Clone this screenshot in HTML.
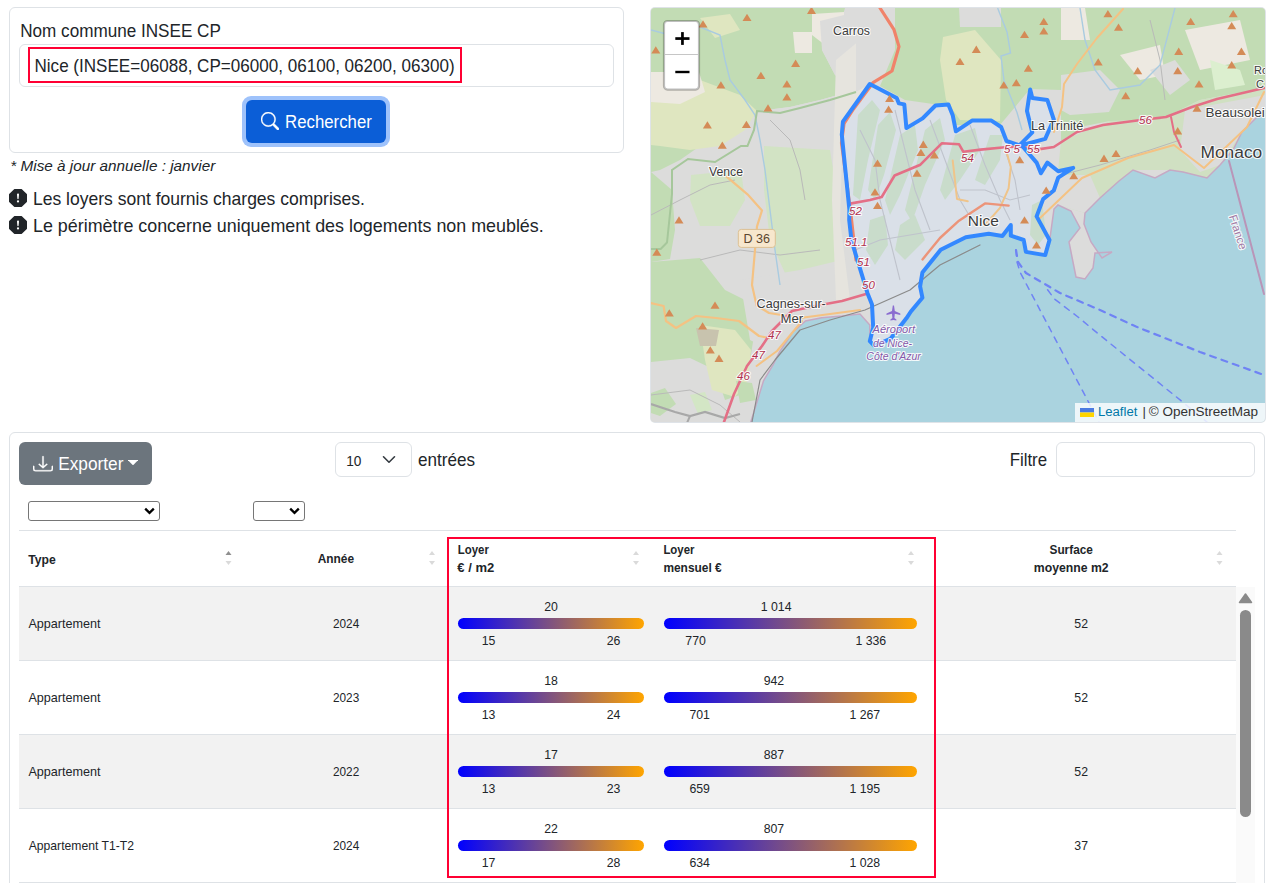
<!DOCTYPE html>
<html lang="fr">
<head>
<meta charset="utf-8">
<title>Loyers</title>
<style>
*{box-sizing:border-box;margin:0;padding:0}
html,body{width:1274px;height:883px;overflow:hidden;background:#fff}
body{font-family:"Liberation Sans",sans-serif;color:#212529;position:relative}
.abs{position:absolute}
.card{position:absolute;border:1px solid #dee2e6;border-radius:6px;background:#fff}
.sel{position:absolute;border:1px solid #767676;border-radius:3px;background:#fff}
.bar{position:absolute;height:11px;border-radius:6px;background:linear-gradient(to right,#0000ff,#ffa500)}
svg text{font-family:"Liberation Sans",sans-serif}
#ov{position:absolute;left:0;top:0;z-index:10;pointer-events:none}
</style>
</head>
<body>

<!-- Search card -->
<div class="card" style="left:9px;top:7px;width:615px;height:146px"></div>
<div class="abs" style="left:19px;top:44px;width:595px;height:43px;border:1px solid #dee2e6;border-radius:6px"></div>
<div class="abs" style="left:28px;top:47px;width:434px;height:36px;border:2px solid #ff0033"></div>
<div class="abs" style="left:242px;top:96px;width:148px;height:51px;border-radius:9px;background:#9ec2fb"></div>
<div class="abs" style="left:246px;top:100px;width:140px;height:43px;border-radius:6px;background:#0b5ed7"></div>
<svg class="abs" style="left:261px;top:112px" width="18" height="18" viewBox="0 0 16 16" fill="#fff" stroke="#fff" stroke-width="0.35"><path d="M11.742 10.344a6.5 6.5 0 1 0-1.397 1.398h-.001q.044.06.098.115l3.85 3.85a1 1 0 0 0 1.415-1.414l-3.85-3.85a1 1 0 0 0-.115-.1zM12 6.5a5.5 5.5 0 1 1-11 0 5.5 5.5 0 0 1 11 0"/></svg>

<svg class="abs" style="left:9px;top:189px" width="18" height="18" viewBox="0 0 16 16" fill="#212529"><path d="M11.46.146A.5.5 0 0 0 11.107 0H4.893a.5.5 0 0 0-.353.146L.146 4.54A.5.5 0 0 0 0 4.893v6.214a.5.5 0 0 0 .146.353l4.394 4.394a.5.5 0 0 0 .353.146h6.214a.5.5 0 0 0 .353-.146l4.394-4.394a.5.5 0 0 0 .146-.353V4.893a.5.5 0 0 0-.146-.353zM8 4c.535 0 .954.462.9.995l-.35 3.507a.552.552 0 0 1-1.1 0L7.1 4.995A.905.905 0 0 1 8 4m.002 6a1 1 0 1 1 0 2 1 1 0 0 1 0-2"/></svg>
<svg class="abs" style="left:9px;top:216px" width="18" height="18" viewBox="0 0 16 16" fill="#212529"><path d="M11.46.146A.5.5 0 0 0 11.107 0H4.893a.5.5 0 0 0-.353.146L.146 4.54A.5.5 0 0 0 0 4.893v6.214a.5.5 0 0 0 .146.353l4.394 4.394a.5.5 0 0 0 .353.146h6.214a.5.5 0 0 0 .353-.146l4.394-4.394a.5.5 0 0 0 .146-.353V4.893a.5.5 0 0 0-.146-.353zM8 4c.535 0 .954.462.9.995l-.35 3.507a.552.552 0 0 1-1.1 0L7.1 4.995A.905.905 0 0 1 8 4m.002 6a1 1 0 1 1 0 2 1 1 0 0 1 0-2"/></svg>

<!-- MAP -->
<div id="map" class="abs" style="left:651px;top:8px;width:614px;height:414px;border-radius:4px;overflow:hidden;background:#dcdcd6;box-shadow:0 0 0 1px #dfe3e8">
<svg width="614" height="414" viewBox="651 8 614 414" style="position:absolute;left:0;top:0">
<rect x="651" y="8" width="614" height="414" fill="#dcdcdb"/>
<polygon points="651.0,8.0 845.0,8.0 840.0,25.0 822.0,50.0 835.0,75.0 856.0,88.0 845.0,93.0 820.0,100.0 790.0,107.0 757.0,111.0 745.0,125.0 735.0,135.0 700.0,146.0 680.0,160.0 660.0,170.0 651.0,172.0" fill="#c2dcb4"/>
<polygon points="651.0,85.0 700.0,80.0 740.0,95.0 757.0,111.0 745.0,130.0 720.0,146.0 690.0,150.0 660.0,146.0 651.0,145.0" fill="#dfe6c0"/>
<polygon points="651.0,72.0 699.0,72.0 705.0,92.0 680.0,104.0 651.0,102.0" fill="#ede9e1"/>
<polygon points="812.0,14.0 844.0,12.0 844.0,40.0 825.0,45.0 812.0,35.0" fill="#ede9e1"/>
<polygon points="793.0,32.0 812.0,32.0 812.0,53.0 795.0,53.0" fill="#ede9e1"/>
<polygon points="700.0,18.0 730.0,14.0 740.0,30.0 715.0,38.0" fill="#dfe6c0"/>
<polygon points="757.0,111.0 790.0,107.0 820.0,100.0 845.0,93.0 856.0,88.0 856.0,146.0 830.0,160.0 800.0,165.0 765.0,165.0 750.0,150.0" fill="#dcdcdb"/>
<polygon points="820.0,21.0 856.0,12.0 856.0,88.0 835.0,75.0 822.0,50.0" fill="#dcdcdb"/>
<polygon points="651.0,172.0 672.0,190.0 675.0,230.0 670.0,259.0 651.0,262.0" fill="#c2dcb4"/>
<polygon points="691.0,175.0 741.0,170.0 745.0,200.0 730.0,226.0 700.0,226.0 690.0,200.0" fill="#d2e3c4"/>
<polygon points="764.0,146.0 830.0,150.0 838.0,200.0 836.0,284.0 790.0,284.0 770.0,240.0 764.0,190.0" fill="#d2e3c4"/>
<polygon points="651.0,262.0 700.0,258.0 725.0,290.0 745.0,300.0 755.0,330.0 750.0,360.0 740.0,395.0 725.0,400.0 715.0,370.0 690.0,358.0 651.0,362.0" fill="#c2dcb4"/>
<polygon points="700.0,325.0 735.0,330.0 751.0,350.0 748.0,380.0 735.0,397.0 712.0,390.0 705.0,360.0" fill="#dfe6c0"/>
<polygon points="696.0,328.0 719.0,330.0 716.0,346.0 700.0,346.0" fill="#c8c3ae"/>
<polygon points="651.0,393.0 665.0,388.0 676.0,404.0 660.0,416.0 651.0,413.0" fill="#c2dcb4"/>
<polygon points="736.0,381.0 752.0,383.0 756.0,400.0 740.0,403.0" fill="#c2dcb4"/>
<polygon points="690.0,395.0 705.0,392.0 712.0,410.0 698.0,414.0" fill="#d3e6c5"/>
<polygon points="740.0,280.0 800.0,270.0 850.0,258.0 862.0,295.0 860.0,312.0 820.0,318.0 790.0,330.0 770.0,350.0 750.0,340.0" fill="#dcdcdb"/>
<polygon points="836.0,60.0 860.0,40.0 880.0,30.0 870.0,84.0 843.0,122.0 840.0,220.0 850.0,300.0 836.0,300.0 832.0,200.0" fill="#e6e4de"/>
<polygon points="856.0,8.0 901.0,8.0 898.0,50.0 880.0,85.0 869.8,84.0 856.0,92.0" fill="#dcdcdb"/>
<polygon points="895.0,8.0 1061.0,8.0 1061.0,90.0 1030.0,89.0 1000.0,125.0 955.0,125.0 940.0,105.0 905.0,100.0 880.0,86.0 895.0,50.0" fill="#c2dcb4"/>
<polygon points="943.0,37.0 975.0,30.0 1001.0,60.0 1000.0,121.0 960.0,120.0 946.0,100.0 940.0,60.0" fill="#dfe6c0"/>
<polygon points="959.0,8.0 1001.0,8.0 1001.0,27.0 960.0,27.0" fill="#dcdcdb"/>
<polygon points="1061.0,8.0 1265.0,8.0 1265.0,88.0 1200.0,100.0 1160.0,120.0 1110.0,121.0 1085.0,126.0 1061.0,141.0" fill="#c2dcb4"/>
<polygon points="1061.0,8.0 1085.0,8.0 1090.0,40.0 1061.0,40.0" fill="#ede9e1"/>
<polygon points="1185.0,30.0 1240.0,20.0 1250.0,60.0 1200.0,70.0" fill="#ede9e1"/>
<polygon points="1120.0,55.0 1160.0,45.0 1165.0,75.0 1140.0,80.0" fill="#ede9e1"/>
<polygon points="1210.0,60.0 1240.0,70.0 1245.0,85.0 1215.0,90.0" fill="#dcefcf"/>
<polygon points="1061.0,75.0 1100.0,70.0 1120.0,90.0 1109.0,112.0 1070.0,115.0 1061.0,110.0" fill="#dcdcdb"/>
<polygon points="1150.0,70.0 1175.0,60.0 1190.0,80.0 1170.0,95.0" fill="#dcdcdb"/>
<polygon points="1061.0,141.0 1110.0,121.0 1160.0,120.0 1200.0,100.0 1265.0,88.0 1265.0,109.0 1233.0,150.0 1207.0,178.0 1170.0,170.0 1133.0,170.0 1100.0,198.0 1085.0,213.0 1058.0,205.0 1050.0,190.0 1058.0,177.0 1073.0,168.0 1058.0,171.0" fill="#d0e0c2"/>
<polygon points="1185.0,110.0 1265.0,95.0 1265.0,110.0 1242.0,132.0 1220.0,165.0 1200.0,172.0 1180.0,150.0" fill="#dcdcdb"/>
<polygon points="1045.0,175.0 1090.0,175.0 1100.0,198.0 1085.0,213.0 1058.0,205.0 1045.0,210.0" fill="#dcdcdb"/>
<polygon points="869.8,84.0 896.7,98.0 898.9,103.4 904.3,104.4 906.4,128.1 922.6,118.4 935.5,105.5 948.4,104.4 952.7,115.2 955.9,131.3 972.0,120.6 991.4,120.6 1001.1,127.0 1006.5,141.0 1019.4,145.3 1032.3,132.4 1027.0,110.9 1030.2,89.4 1032.3,98.0 1047.4,100.1 1053.8,119.5 1045.2,138.9 1021.6,145.3 1036.6,162.6 1040.9,173.3 1047.4,162.6 1058.2,171.2 1073.2,167.9 1058.2,177.6 1053.8,190.5 1043.1,199.1 1036.6,216.4 1049.5,240.0 1045.2,255.1 1025.9,251.9 1023.7,240.0 1010.8,235.7 1010.8,225.0 1002.4,236.0 988.7,233.7 965.8,237.2 940.7,249.7 922.4,272.6 920.1,286.3 922.4,297.7 910.9,311.5 906.4,318.3 890.3,338.9 874.3,345.8 869.8,341.2 873.2,327.5 872.0,304.6 867.5,293.2 851.5,240.6 849.2,220.0 849.4,209.9 841.8,134.6 842.9,121.7" fill="#dae0e8"/>
<polygon points="858.0,115.0 872.0,100.0 880.0,110.0 868.0,160.0 860.0,200.0 853.0,195.0" fill="#c9dccb"/>
<polygon points="878.0,125.0 890.0,112.0 896.0,130.0 884.0,175.0 875.0,200.0 868.0,190.0" fill="#c9dccb"/>
<polygon points="900.0,135.0 915.0,125.0 918.0,150.0 900.0,195.0 890.0,215.0 885.0,200.0" fill="#c9dccb"/>
<polygon points="925.0,130.0 940.0,118.0 945.0,140.0 925.0,185.0 912.0,222.0 905.0,210.0" fill="#c9dccb"/>
<polygon points="955.0,135.0 975.0,128.0 980.0,150.0 960.0,180.0 945.0,200.0 940.0,190.0" fill="#c9dccb"/>
<polygon points="990.0,135.0 1003.0,135.0 1000.0,160.0 985.0,185.0 975.0,180.0" fill="#c9dccb"/>
<polygon points="900.0,225.0 915.0,215.0 925.0,240.0 905.0,260.0 895.0,250.0" fill="#c9dccb"/>
<polygon points="870.0,220.0 885.0,215.0 888.0,245.0 875.0,265.0 866.0,250.0" fill="#c9dccb"/>
<polygon points="1032.0,205.0 1042.0,200.0 1046.0,235.0 1038.0,245.0 1030.0,235.0" fill="#c9dccb"/>
<polyline points="860.0,130.0 875.0,160.0 880.0,200.0 890.0,240.0 900.0,280.0" fill="none" stroke="#bfc3cc" stroke-width="1.1"/>
<polyline points="895.0,110.0 905.0,150.0 915.0,190.0 930.0,230.0" fill="none" stroke="#bfc3cc" stroke-width="1.1"/>
<polyline points="930.0,120.0 945.0,160.0 960.0,200.0 975.0,225.0" fill="none" stroke="#bfc3cc" stroke-width="1.1"/>
<polyline points="970.0,125.0 985.0,165.0 1000.0,200.0 1010.0,220.0" fill="none" stroke="#bfc3cc" stroke-width="1.1"/>
<polyline points="1005.0,150.0 1015.0,180.0 1020.0,210.0" fill="none" stroke="#bfc3cc" stroke-width="1.1"/>
<polyline points="855.0,250.0 880.0,240.0 910.0,235.0 940.0,230.0" fill="none" stroke="#bfc3cc" stroke-width="1.1"/>
<polyline points="960.0,190.0 985.0,190.0 1010.0,200.0 1030.0,195.0" fill="none" stroke="#bfc3cc" stroke-width="1.1"/>
<polyline points="651.0,215.0 680.0,200.0 710.0,185.0 735.0,180.0" fill="none" stroke="#b9b9b9" stroke-width="1"/>
<polyline points="700.0,260.0 740.0,250.0 780.0,255.0 820.0,250.0" fill="none" stroke="#b9b9b9" stroke-width="1"/>
<polyline points="651.0,395.0 690.0,390.0 720.0,405.0 740.0,422.0" fill="none" stroke="#b9b9b9" stroke-width="1"/>
<polyline points="770.0,120.0 790.0,140.0 800.0,170.0 805.0,200.0" fill="none" stroke="#b9b9b9" stroke-width="1"/>
<polyline points="1061.0,175.0 1100.0,165.0 1150.0,150.0 1180.0,140.0" fill="none" stroke="#b9b9b9" stroke-width="1"/>
<polyline points="1150.0,20.0 1160.0,60.0 1165.0,100.0" fill="none" stroke="#b9b9b9" stroke-width="1"/>
<polyline points="651.0,30.0 670.0,35.0 700.0,27.0 720.0,35.0 725.0,60.0 730.0,80.0 745.0,100.0 755.0,115.0 760.0,140.0 765.0,170.0 770.0,210.0 775.0,250.0 780.0,285.0" fill="none" stroke="#a9cbe0" stroke-width="1.4"/>
<polyline points="1080.0,8.0 1085.0,40.0 1095.0,70.0 1110.0,90.0 1140.0,85.0 1160.0,65.0 1175.0,8.0" fill="none" stroke="#a9cbe0" stroke-width="1.4"/>
<polyline points="997.6,8.0 1007.0,32.0 1010.5,53.0 1001.0,56.0 1004.0,80.4 1017.0,112.6 1022.0,130.0" fill="none" stroke="#a9cbe0" stroke-width="1.4"/>
<polyline points="651.0,404.0 675.0,412.0 690.0,416.0 705.0,412.0 725.0,418.0 740.0,414.0" fill="none" stroke="#a8a8a8" stroke-width="2.2"/>
<polyline points="690.0,416.0 684.0,430.0" fill="none" stroke="#a8a8a8" stroke-width="2"/>
<polyline points="651.0,249.0 660.7,249.0 667.0,242.5 672.0,194.0 672.0,170.0 688.0,159.0 715.0,162.0 741.0,146.0 747.5,146.0 754.0,130.0 757.0,111.0 780.0,113.0 800.0,108.0 830.0,100.0 856.0,92.0" fill="none" stroke="#a6c79b" stroke-width="2"/>
<polygon points="750.8,422.0 763.6,380.5 773.3,364.4 779.7,351.6 792.6,332.3 805.5,321.0 821.6,317.8 842.0,316.0 860.0,314.0 869.8,325.0 869.8,341.2 874.3,345.8 890.3,338.9 906.4,318.3 910.9,311.5 922.4,297.7 920.1,286.3 922.4,272.6 940.7,249.7 965.8,237.2 988.7,233.7 1002.4,236.0 1010.8,225.0 1010.8,235.7 1023.7,240.0 1025.9,251.9 1045.2,255.1 1050.0,238.0 1054.0,209.0 1058.0,205.0 1071.0,211.0 1080.0,228.0 1069.0,242.0 1072.0,257.0 1076.0,277.0 1085.0,279.0 1093.0,268.0 1095.0,253.0 1112.0,252.0 1102.0,258.0 1091.0,242.0 1084.0,224.0 1085.0,213.0 1100.0,198.0 1119.0,181.0 1133.0,170.0 1155.0,178.0 1170.0,170.0 1183.0,172.0 1207.0,178.0 1220.0,165.0 1233.0,150.0 1242.0,132.0 1265.0,109.0 1272.0,100.0 1272.0,430.0 745.0,430.0" fill="#aad3df" stroke="#c6a9c4" stroke-width="1.5"/>
<polyline points="726.6,176.6 747.5,194.3 762.0,210.4 757.0,226.4 755.0,250.0 752.0,285.0 756.6,305.6 769.0,313.0 800.0,318.0 830.0,314.0 860.0,310.0" fill="none" stroke="#f4c283" stroke-width="2.2" stroke-linejoin="round" stroke-linecap="round" />
<polyline points="651.0,303.0 663.6,306.0 666.0,321.0 676.0,328.0 696.0,316.0 716.0,318.0 739.0,321.0 759.0,336.0 769.0,338.0" fill="none" stroke="#f4c283" stroke-width="2.2" stroke-linejoin="round" stroke-linecap="round" />
<polyline points="756.6,366.0 777.0,351.0 802.0,321.0" fill="none" stroke="#f4c283" stroke-width="2" stroke-linejoin="round" stroke-linecap="round" />
<polyline points="1123.0,9.0 1097.0,38.0 1077.0,64.0 1064.0,84.0 1062.0,107.0 1054.0,132.0" fill="none" stroke="#f4c283" stroke-width="2" stroke-linejoin="round" stroke-linecap="round" />
<polyline points="1039.0,219.0 1082.0,178.0 1128.0,158.0 1174.0,145.0 1204.0,168.0 1247.0,127.0 1264.0,92.0" fill="none" stroke="#f4c283" stroke-width="2" stroke-linejoin="round" stroke-linecap="round" />
<polyline points="880.0,8.0 894.0,29.7 899.0,46.6 892.0,71.0 873.0,82.7 853.5,109.0 844.0,123.7 841.5,143.0 846.0,176.6 851.0,215.0 856.0,260.0" fill="none" stroke="#f0836a" stroke-width="3.2" stroke-linejoin="round" stroke-linecap="round" />
<polyline points="724.0,422.0 734.0,394.0 747.0,366.0 762.0,346.0 772.0,331.0 792.0,311.0 815.0,306.0 842.0,301.0 866.0,294.0" fill="none" stroke="#e46f86" stroke-width="2.6" stroke-linejoin="round" stroke-linecap="round" />
<polyline points="851.5,203.4 870.0,200.0 881.7,197.0 894.6,175.5 920.4,164.7 942.0,143.2 959.1,144.3 963.4,151.8 980.7,149.6 1002.2,147.5 1019.4,146.4 1036.6,149.6 1053.8,147.0 1077.0,132.0 1103.0,125.0 1141.0,120.0 1166.0,117.0 1192.0,107.0 1217.0,99.0 1264.0,88.0" fill="none" stroke="#e46f86" stroke-width="2.6" stroke-linejoin="round" stroke-linecap="round" />
<polyline points="952.7,160.4 957.0,199.0 967.8,201.3" fill="none" stroke="#efc48a" stroke-width="2" stroke-linejoin="round" stroke-linecap="round" />
<polyline points="1006.5,151.8 1010.8,166.9 1008.6,188.4 1000.0,207.8 985.0,225.0" fill="none" stroke="#efc48a" stroke-width="2" stroke-linejoin="round" stroke-linecap="round" />
<polyline points="1171.0,117.0 1174.0,132.0 1181.0,147.0" fill="none" stroke="#e46f86" stroke-width="2" stroke-linejoin="round" stroke-linecap="round" />
<polyline points="922.5,259.4 940.0,238.0 959.0,220.7 985.0,203.4 1008.6,205.6" fill="none" stroke="#ec9479" stroke-width="2.4" stroke-linejoin="round" stroke-linecap="round" />
<polyline points="752.0,422.0 760.0,380.0 775.0,360.0 800.0,330.0 830.0,320.0 865.0,310.0 910.0,290.0 940.0,265.0 980.0,245.0" fill="none" stroke="#8a8a8a" stroke-width="1.2" stroke-linejoin="round" stroke-linecap="round" />
<polyline points="1016.0,250.0 1017.0,262.0 1020.4,272.8 1053.2,335.1 1099.0,422.0" fill="none" stroke="#6f83f4" stroke-width="1.5" stroke-linejoin="round" stroke-linecap="round" stroke-dasharray="6 6"/>
<polyline points="1047.6,289.8 1054.4,298.9 1078.0,317.0 1098.5,334.0 1181.0,400.7 1207.0,422.0" fill="none" stroke="#6f83f4" stroke-width="1.5" stroke-linejoin="round" stroke-linecap="round" stroke-dasharray="6 6"/>
<polyline points="1016.0,250.0 1018.0,262.0 1026.0,273.0 1060.0,293.0 1100.0,310.0 1136.0,326.6 1200.0,352.0 1264.0,375.0" fill="none" stroke="#6f83f4" stroke-width="2.2" stroke-linejoin="round" stroke-linecap="round" stroke-dasharray="6 6"/>
<polyline points="1229.0,161.0 1264.0,294.0" fill="none" stroke="#b995b8" stroke-width="2" stroke-linejoin="round" stroke-linecap="round" />
<polygon points="869.8,84.0 896.7,98.0 898.9,103.4 904.3,104.4 906.4,128.1 922.6,118.4 935.5,105.5 948.4,104.4 952.7,115.2 955.9,131.3 972.0,120.6 991.4,120.6 1001.1,127.0 1006.5,141.0 1019.4,145.3 1032.3,132.4 1027.0,110.9 1030.2,89.4 1032.3,98.0 1047.4,100.1 1053.8,119.5 1045.2,138.9 1021.6,145.3 1036.6,162.6 1040.9,173.3 1047.4,162.6 1058.2,171.2 1073.2,167.9 1058.2,177.6 1053.8,190.5 1043.1,199.1 1036.6,216.4 1049.5,240.0 1045.2,255.1 1025.9,251.9 1023.7,240.0 1010.8,235.7 1010.8,225.0 1002.4,236.0 988.7,233.7 965.8,237.2 940.7,249.7 922.4,272.6 920.1,286.3 922.4,297.7 910.9,311.5 906.4,318.3 890.3,338.9 874.3,345.8 869.8,341.2 873.2,327.5 872.0,304.6 867.5,293.2 851.5,240.6 849.2,220.0 849.4,209.9 841.8,134.6 842.9,121.7" fill="none" stroke="#3388ff" stroke-width="4" stroke-linejoin="round"/>
<path d="M742.5 21.1L747.0 13.8L751.5 21.1z" fill="#d48b57"/>
<path d="M807.0 13.9L811.5 6.6L816.0 13.9z" fill="#d48b57"/>
<path d="M698.5 27.5L703.0 20.2L707.5 27.5z" fill="#d48b57"/>
<path d="M651.3 53.5L655.8 46.2L660.3 53.5z" fill="#d48b57"/>
<path d="M756.4 79.0L760.9 71.7L765.4 79.0z" fill="#d48b57"/>
<path d="M791.1 66.9L795.6 59.6L800.1 66.9z" fill="#d48b57"/>
<path d="M782.4 87.5L786.9 80.2L791.4 87.5z" fill="#d48b57"/>
<path d="M782.4 100.5L786.9 93.2L791.4 100.5z" fill="#d48b57"/>
<path d="M716.4 88.5L720.9 81.2L725.4 88.5z" fill="#d48b57"/>
<path d="M763.5 111.5L768.0 104.2L772.5 111.5z" fill="#d48b57"/>
<path d="M741.9 128.1L746.4 120.8L750.9 128.1z" fill="#d48b57"/>
<path d="M702.9 128.5L707.4 121.2L711.9 128.5z" fill="#d48b57"/>
<path d="M717.8 148.8L722.3 141.5L726.8 148.8z" fill="#d48b57"/>
<path d="M674.5 223.5L679.0 216.2L683.5 223.5z" fill="#d48b57"/>
<path d="M652.3 255.8L656.8 248.5L661.3 255.8z" fill="#d48b57"/>
<path d="M664.8 316.5L669.3 309.2L673.8 316.5z" fill="#d48b57"/>
<path d="M710.5 308.8L715.0 301.5L719.5 308.8z" fill="#d48b57"/>
<path d="M698.1 329.5L702.6 322.2L707.1 329.5z" fill="#d48b57"/>
<path d="M705.8 353.5L710.3 346.2L714.8 353.5z" fill="#d48b57"/>
<path d="M714.5 361.9L719.0 354.6L723.5 361.9z" fill="#d48b57"/>
<path d="M885.1 102.1L889.6 94.8L894.1 102.1z" fill="#d48b57"/>
<path d="M884.1 112.7L888.6 105.4L893.1 112.7z" fill="#d48b57"/>
<path d="M918.8 147.9L923.3 140.6L927.8 147.9z" fill="#d48b57"/>
<path d="M916.4 156.1L920.9 148.8L925.4 156.1z" fill="#d48b57"/>
<path d="M929.9 158.5L934.4 151.2L938.9 158.5z" fill="#d48b57"/>
<path d="M873.0 166.7L877.5 159.4L882.0 166.7z" fill="#d48b57"/>
<path d="M870.5 195.5L875.0 188.2L879.5 195.5z" fill="#d48b57"/>
<path d="M873.0 209.1L877.5 201.8L882.0 209.1z" fill="#d48b57"/>
<path d="M912.5 176.8L917.0 169.5L921.5 176.8z" fill="#d48b57"/>
<path d="M955.5 65.0L960.0 57.7L964.5 65.0z" fill="#d48b57"/>
<path d="M971.8 52.9L976.3 45.6L980.8 52.9z" fill="#d48b57"/>
<path d="M1023.8 71.7L1028.3 64.4L1032.8 71.7z" fill="#d48b57"/>
<path d="M1020.0 38.0L1024.5 30.7L1029.0 38.0z" fill="#d48b57"/>
<path d="M1039.3 25.0L1043.8 17.7L1048.3 25.0z" fill="#d48b57"/>
<path d="M1039.3 34.6L1043.8 27.3L1048.3 34.6z" fill="#d48b57"/>
<path d="M999.3 88.6L1003.8 81.3L1008.3 88.6z" fill="#d48b57"/>
<path d="M1011.8 86.2L1016.3 78.9L1020.8 86.2z" fill="#d48b57"/>
<path d="M1103.4 17.3L1107.9 10.0L1112.4 17.3z" fill="#d48b57"/>
<path d="M1114.0 30.8L1118.5 23.5L1123.0 30.8z" fill="#d48b57"/>
<path d="M1093.7 65.5L1098.2 58.2L1102.7 65.5z" fill="#d48b57"/>
<path d="M1121.2 99.2L1125.7 91.9L1130.2 99.2z" fill="#d48b57"/>
<path d="M1133.2 74.2L1137.7 66.9L1142.2 74.2z" fill="#d48b57"/>
<path d="M1174.2 54.9L1178.7 47.6L1183.2 54.9z" fill="#d48b57"/>
<path d="M1186.2 25.0L1190.7 17.7L1195.2 25.0z" fill="#d48b57"/>
<path d="M1228.7 17.3L1233.2 10.0L1237.7 17.3z" fill="#d48b57"/>
<path d="M1227.2 29.3L1231.7 22.0L1236.2 29.3z" fill="#d48b57"/>
<path d="M1236.9 54.9L1241.4 47.6L1245.9 54.9z" fill="#d48b57"/>
<path d="M1227.2 68.4L1231.7 61.1L1236.2 68.4z" fill="#d48b57"/>
<path d="M1194.5 87.6L1199.0 80.3L1203.5 87.6z" fill="#d48b57"/>
<path d="M1173.2 74.2L1177.7 66.9L1182.2 74.2z" fill="#d48b57"/>
<path d="M1192.5 111.7L1197.0 104.4L1201.5 111.7z" fill="#d48b57"/>
<path d="M1173.2 134.4L1177.7 127.1L1182.2 134.4z" fill="#d48b57"/>
<path d="M1099.5 161.9L1104.0 154.6L1108.5 161.9z" fill="#d48b57"/>
<path d="M1111.5 157.0L1116.0 149.7L1120.5 157.0z" fill="#d48b57"/>
<path d="M1069.2 179.2L1073.7 171.9L1078.2 179.2z" fill="#d48b57"/>
<path d="M1041.7 193.7L1046.2 186.4L1050.7 193.7z" fill="#d48b57"/>
<path d="M1015.2 163.3L1019.7 156.0L1024.2 163.3z" fill="#d48b57"/>
<path d="M1032.0 248.5L1036.5 241.2L1041.0 248.5z" fill="#d48b57"/>
<path d="M1020.0 223.5L1024.5 216.2L1029.0 223.5z" fill="#d48b57"/>
<text x="833.00" y="35.20" font-size="12.33" font-weight="normal" font-style="normal" fill="#3c3c3c" stroke="#fff" stroke-width="2.2" stroke-opacity="0.85" paint-order="stroke" stroke-linejoin="round">Carros</text>
<text x="709.00" y="176.00" font-size="12.23" font-weight="normal" font-style="normal" fill="#3c3c3c" stroke="#fff" stroke-width="2.2" stroke-opacity="0.85" paint-order="stroke" stroke-linejoin="round">Vence</text>
<text x="1031.00" y="129.70" font-size="12.76" font-weight="normal" font-style="normal" fill="#3c3c3c" stroke="#fff" stroke-width="2.2" stroke-opacity="0.85" paint-order="stroke" stroke-linejoin="round">La Trinité</text>
<text x="1205.60" y="117.00" font-size="13.44" font-weight="normal" font-style="normal" fill="#3c3c3c" stroke="#fff" stroke-width="2.2" stroke-opacity="0.85" paint-order="stroke" stroke-linejoin="round">Beausoleil</text>
<text x="1200.50" y="157.70" font-size="17.37" font-weight="normal" font-style="normal" fill="#3c3c3c" stroke="#fff" stroke-width="2.2" stroke-opacity="0.85" paint-order="stroke" stroke-linejoin="round">Monaco</text>
<text x="1254.00" y="73.80" font-size="10.95" font-weight="normal" font-style="normal" fill="#3c3c3c" stroke="#fff" stroke-width="2.2" stroke-opacity="0.85" paint-order="stroke" stroke-linejoin="round">Ro</text>
<text x="1256.00" y="88.00" font-size="11.08" font-weight="normal" font-style="normal" fill="#3c3c3c" stroke="#fff" stroke-width="2.2" stroke-opacity="0.85" paint-order="stroke" stroke-linejoin="round">C</text>
<text x="967.80" y="225.80" font-size="15.49" font-weight="normal" font-style="normal" fill="#3c3c3c" stroke="#fff" stroke-width="2.2" stroke-opacity="0.85" paint-order="stroke" stroke-linejoin="round">Nice</text>
<text x="756.60" y="307.60" font-size="12.58" font-weight="normal" font-style="normal" fill="#3c3c3c" stroke="#fff" stroke-width="2.2" stroke-opacity="0.85" paint-order="stroke" stroke-linejoin="round">Cagnes-sur-</text>
<text x="780.50" y="323.20" font-size="13.18" font-weight="normal" font-style="normal" fill="#3c3c3c" stroke="#fff" stroke-width="2.2" stroke-opacity="0.85" paint-order="stroke" stroke-linejoin="round">Mer</text>
<text x="872.55" y="333.20" font-size="11.09" font-weight="normal" font-style="italic" fill="#8559a8" stroke="#fff" stroke-width="2.2" stroke-opacity="0.85" paint-order="stroke" stroke-linejoin="round">Aéroport</text>
<text x="873.00" y="346.50" font-size="10.47" font-weight="normal" font-style="italic" fill="#8559a8" stroke="#fff" stroke-width="2.2" stroke-opacity="0.85" paint-order="stroke" stroke-linejoin="round">de Nice-</text>
<text x="866.30" y="359.50" font-size="10.50" font-weight="normal" font-style="italic" fill="#8559a8" stroke="#fff" stroke-width="2.2" stroke-opacity="0.85" paint-order="stroke" stroke-linejoin="round">Côte d&#x27;Azur</text>
<text x="961.00" y="162.00" font-size="11.50" font-weight="normal" font-style="italic" fill="#b0304e" stroke="#fff" stroke-width="2.2" stroke-opacity="0.85" paint-order="stroke" stroke-linejoin="round">54</text>
<text x="1139.00" y="124.00" font-size="11.50" font-weight="normal" font-style="italic" fill="#b0304e" stroke="#fff" stroke-width="2.2" stroke-opacity="0.85" paint-order="stroke" stroke-linejoin="round">56</text>
<text x="1027.00" y="153.00" font-size="11.50" font-weight="normal" font-style="italic" fill="#b0304e" stroke="#fff" stroke-width="2.2" stroke-opacity="0.85" paint-order="stroke" stroke-linejoin="round">55</text>
<text x="849.00" y="215.00" font-size="11.50" font-weight="normal" font-style="italic" fill="#b0304e" stroke="#fff" stroke-width="2.2" stroke-opacity="0.85" paint-order="stroke" stroke-linejoin="round">52</text>
<text x="845.00" y="246.00" font-size="11.50" font-weight="normal" font-style="italic" fill="#b0304e" stroke="#fff" stroke-width="2.2" stroke-opacity="0.85" paint-order="stroke" stroke-linejoin="round">51.1</text>
<text x="857.00" y="266.00" font-size="11.50" font-weight="normal" font-style="italic" fill="#b0304e" stroke="#fff" stroke-width="2.2" stroke-opacity="0.85" paint-order="stroke" stroke-linejoin="round">51</text>
<text x="862.00" y="289.00" font-size="11.50" font-weight="normal" font-style="italic" fill="#b0304e" stroke="#fff" stroke-width="2.2" stroke-opacity="0.85" paint-order="stroke" stroke-linejoin="round">50</text>
<text x="768.00" y="339.00" font-size="11.50" font-weight="normal" font-style="italic" fill="#b0304e" stroke="#fff" stroke-width="2.2" stroke-opacity="0.85" paint-order="stroke" stroke-linejoin="round">47</text>
<text x="752.00" y="359.00" font-size="11.50" font-weight="normal" font-style="italic" fill="#b0304e" stroke="#fff" stroke-width="2.2" stroke-opacity="0.85" paint-order="stroke" stroke-linejoin="round">47</text>
<text x="737.00" y="380.00" font-size="11.50" font-weight="normal" font-style="italic" fill="#b0304e" stroke="#fff" stroke-width="2.2" stroke-opacity="0.85" paint-order="stroke" stroke-linejoin="round">46</text>
<text x="1004.00" y="153.00" font-size="11.50" font-weight="normal" font-style="italic" fill="#b0304e" stroke="#fff" stroke-width="2.2" stroke-opacity="0.85" paint-order="stroke" stroke-linejoin="round">5 5</text>
<g transform="translate(1238,232) rotate(72)"><text x="-17.89" y="4.00" font-size="11.50" font-weight="normal" font-style="normal" fill="#a27aa4" stroke="#fff" stroke-width="2.2" stroke-opacity="0.85" paint-order="stroke" stroke-linejoin="round">France</text></g>
<rect x="738.3" y="229.4" width="37" height="18" rx="3" fill="#f7e7cd" stroke="#dcc093" stroke-width="1"/>
<text x="743.50" y="243.00" font-size="12.55" font-weight="normal" font-style="normal" fill="#5a4630" >D 36</text>
<path d="M893.8 305.5 l1.2 0 l0.8 5.5 l5.5 2.5 l0 1.5 l-5.5 -1.2 l-0.4 4.3 l2 1.5 l0 1 l-3 -0.7 l-3 0.7 l0 -1 l2 -1.5 l-0.4 -4.3 l-5.5 1.2 l0 -1.5 l5.5 -2.5 z" fill="#8a6cd0" transform="translate(-1,0)"/>
<rect x="664" y="21" width="35" height="68.6" rx="3.5" fill="#fff" stroke="#000" stroke-opacity="0.25" stroke-width="2.2"/>
<rect x="665" y="54" width="33" height="1" fill="#c6c6c6"/>
<rect x="675.3" y="37.2" width="14.2" height="2.7" fill="#000"/><rect x="681.1" y="32.1" width="2.7" height="12.8" fill="#000"/>
<rect x="675.3" y="70.8" width="14.2" height="2.4" fill="#000"/>
<rect x="1075" y="403" width="190" height="19" fill="#fff" fill-opacity="0.8"/>
<rect x="1080" y="408" width="14" height="4.5" fill="#4c7be1"/><rect x="1080" y="412.5" width="14" height="4.5" fill="#ffd500"/>
<text x="1098.00" y="416.00" font-size="13.12" font-weight="normal" font-style="normal" fill="#0078a8" >Leaflet</text>
<text x="1142.50" y="416.00" font-size="13.20" font-weight="normal" font-style="normal" fill="#333" >|</text>
<text x="1148.80" y="416.00" font-size="13.52" font-weight="normal" font-style="normal" fill="#333" >© OpenStreetMap</text>
</svg>
</div>

<!-- Table card -->
<div class="card" style="left:9px;top:432px;width:1256px;height:470px"></div>
<div class="abs" style="left:19px;top:442px;width:133px;height:43px;border-radius:6px;background:#6c757d"></div>
<svg class="abs" style="left:32.5px;top:454.5px" width="20" height="17.5" viewBox="0 0 16 16" preserveAspectRatio="none" fill="#fff" stroke="#fff" stroke-width="0.3"><path d="M.5 9.9a.5.5 0 0 1 .5.5v2.5a1 1 0 0 0 1 1h12a1 1 0 0 0 1-1v-2.5a.5.5 0 0 1 1 0v2.5a2 2 0 0 1-2 2H2a2 2 0 0 1-2-2v-2.5a.5.5 0 0 1 .5-.5"/><path d="M7.646 11.854a.5.5 0 0 0 .708 0l3-3a.5.5 0 0 0-.708-.708L8.5 10.293V1.5a.5.5 0 0 0-1 0v8.793L5.354 8.146a.5.5 0 1 0-.708.708z"/></svg>
<svg class="abs" style="left:128px;top:460px" width="10" height="5" viewBox="0 0 10 5"><path d="M-0.3 0H10.3L5 5.3z" fill="#fff"/></svg>

<div class="abs" style="left:335px;top:442px;width:77px;height:35px;border:1px solid #dee2e6;border-radius:6px"></div>
<svg class="abs" style="left:382px;top:455px" width="14" height="9" viewBox="0 0 14 9"><path d="M1.5 1.8L7 7.2l5.5-5.4" fill="none" stroke="#343a40" stroke-width="1.6" stroke-linecap="round" stroke-linejoin="round"/></svg>
<div class="abs" style="left:1056px;top:442px;width:199px;height:35px;border:1px solid #dee2e6;border-radius:6px"></div>

<div class="sel" style="left:28px;top:501px;width:132px;height:20px"></div>
<svg class="abs" style="left:144px;top:507px" width="11" height="8" viewBox="0 0 11 8"><path d="M1.2 1.6L5.5 5.8L9.8 1.6" fill="none" stroke="#000" stroke-width="2.3"/></svg>
<div class="sel" style="left:253px;top:501px;width:52px;height:20px"></div>
<svg class="abs" style="left:289px;top:507px" width="11" height="8" viewBox="0 0 11 8"><path d="M1.2 1.6L5.5 5.8L9.8 1.6" fill="none" stroke="#000" stroke-width="2.3"/></svg>

<!-- table -->
<div class="abs" style="left:19px;top:530px;width:1217px;height:1px;background:#dee2e6"></div>
<div class="abs" style="left:19px;top:586px;width:1217px;height:1px;background:#dee2e6"></div>
<div class="abs" style="left:19px;top:587px;width:1217px;height:73px;background:#f2f2f2"></div>
<div class="abs" style="left:19px;top:660px;width:1217px;height:1px;background:#dee2e6"></div>
<div class="abs" style="left:19px;top:734px;width:1217px;height:1px;background:#dee2e6"></div>
<div class="abs" style="left:19px;top:735px;width:1217px;height:73px;background:#f2f2f2"></div>
<div class="abs" style="left:19px;top:808px;width:1217px;height:1px;background:#dee2e6"></div>
<div class="abs" style="left:19px;top:882px;width:1217px;height:1px;background:#dee2e6"></div>

<!-- sort arrows -->
<svg class="abs" style="left:0;top:0" width="1274" height="883">
<g fill="#8f8f8f"><path d="M225.5 555h6l-3-4z"/></g>
<g fill="#dadada"><path d="M225.5 561h6l-3 4z"/>
<path d="M429 555h6l-3-4z"/><path d="M429 561h6l-3 4z"/>
<path d="M633 555h6l-3-4z"/><path d="M633 561h6l-3 4z"/>
<path d="M908 555h6l-3-4z"/><path d="M908 561h6l-3 4z"/>
<path d="M1216.5 555h6l-3-4z"/><path d="M1216.5 561h6l-3 4z"/></g>
</svg>

<!-- bars -->
<div class="bar" style="left:458px;top:618px;width:186px"></div>
<div class="bar" style="left:664px;top:618px;width:253px"></div>
<div class="bar" style="left:458px;top:692px;width:186px"></div>
<div class="bar" style="left:664px;top:692px;width:253px"></div>
<div class="bar" style="left:458px;top:766px;width:186px"></div>
<div class="bar" style="left:664px;top:766px;width:253px"></div>
<div class="bar" style="left:458px;top:840px;width:186px"></div>
<div class="bar" style="left:664px;top:840px;width:253px"></div>

<!-- red highlight -->
<div class="abs" style="left:447px;top:537px;width:489px;height:341px;border:2px solid #ff0033"></div>

<!-- scrollbar -->
<div class="abs" style="left:1236px;top:587px;width:19px;height:296px;background:#fafafa"></div>
<svg class="abs" style="left:1238px;top:592px" width="15" height="12" viewBox="0 0 15 12"><path d="M1.5 10.5L7.5 2l6 8.5z" fill="#8a8a8a" stroke="#8a8a8a" stroke-width="1.5" stroke-linejoin="round"/></svg>
<div class="abs" style="left:1240px;top:610px;width:11px;height:207px;border-radius:6px;background:#8a8a8a"></div>

<svg id="ov" width="1274" height="883">
<text transform="translate(20.20,37.00) scale(1,1.086)" font-size="17.12" font-weight="normal" font-style="normal" fill="#212529" >Nom commune INSEE CP</text>
<text transform="translate(34.50,72.00) scale(1,1.090)" font-size="17.07" font-weight="normal" font-style="normal" fill="#212529" >Nice (INSEE=06088, CP=06000, 06100, 06200, 06300)</text>
<text transform="translate(285.10,128.00) scale(1,1.108)" font-size="16.79" font-weight="normal" font-style="normal" fill="#fff" >Rechercher</text>
<text transform="translate(10.30,171.00) scale(1,1.006)" font-size="15.31" font-weight="normal" font-style="italic" fill="#212529" >* Mise à jour annuelle : janvier</text>
<text transform="translate(33.00,205.00) scale(1,1.062)" font-size="17.52" font-weight="normal" font-style="normal" fill="#212529" >Les loyers sont fournis charges comprises.</text>
<text transform="translate(33.00,232.00) scale(1,1.040)" font-size="17.88" font-weight="normal" font-style="normal" fill="#212529" >Le périmètre concerne uniquement des logements non meublés.</text>
<text transform="translate(58.20,470.00) scale(1,1.077)" font-size="17.28" font-weight="normal" font-style="normal" fill="#fff" >Exporter</text>
<text transform="translate(346.20,466.00) scale(1,1.085)" font-size="13.67" font-weight="normal" font-style="normal" fill="#212529" >10</text>
<text transform="translate(418.00,466.00) scale(1,1.021)" font-size="17.09" font-weight="normal" font-style="normal" fill="#212529" >entrées</text>
<text transform="translate(1009.70,466.00) scale(1,1.105)" font-size="16.83" font-weight="normal" font-style="normal" fill="#212529" >Filtre</text>
<text transform="translate(28.30,563.50) scale(1,1.099)" font-size="12.17" font-weight="bold" font-style="normal" fill="#212529" >Type</text>
<text transform="translate(317.70,563.00) scale(1,1.123)" font-size="11.91" font-weight="bold" font-style="normal" fill="#212529" >Année</text>
<text transform="translate(457.80,554.00) scale(1,1.171)" font-size="11.42" font-weight="bold" font-style="normal" fill="#212529" >Loyer</text>
<text transform="translate(457.30,572.00) scale(1,1.025)" font-size="13.05" font-weight="bold" font-style="normal" fill="#212529" >€ / m2</text>
<text transform="translate(663.40,554.00) scale(1,1.171)" font-size="11.42" font-weight="bold" font-style="normal" fill="#212529" >Loyer</text>
<text transform="translate(663.40,572.00) scale(1,1.122)" font-size="11.92" font-weight="bold" font-style="normal" fill="#212529" >mensuel €</text>
<text transform="translate(1049.50,554.00) scale(1,1.130)" font-size="11.83" font-weight="bold" font-style="normal" fill="#212529" >Surface</text>
<text transform="translate(1033.80,572.00) scale(1,1.093)" font-size="12.24" font-weight="bold" font-style="normal" fill="#212529" >moyenne m2</text>
<text transform="translate(28.40,628.00) scale(1,1.037)" font-size="12.61" font-weight="normal" font-style="normal" fill="#212529" >Appartement</text>
<text transform="translate(333.00,628.00) scale(1,1.111)" font-size="11.78" font-weight="normal" font-style="normal" fill="#212529" >2024</text>
<text transform="translate(544.26,610.80) scale(1,1.028)" font-size="12.30" font-weight="normal" font-style="normal" fill="#212529" >20</text>
<text transform="translate(481.66,644.80) scale(1,1.028)" font-size="12.30" font-weight="normal" font-style="normal" fill="#212529" >15</text>
<text transform="translate(606.76,644.80) scale(1,1.028)" font-size="12.30" font-weight="normal" font-style="normal" fill="#212529" >26</text>
<text transform="translate(760.71,610.80) scale(1,1.028)" font-size="12.30" font-weight="normal" font-style="normal" fill="#212529" >1 014</text>
<text transform="translate(685.34,644.80) scale(1,1.028)" font-size="12.30" font-weight="normal" font-style="normal" fill="#212529" >770</text>
<text transform="translate(855.41,644.80) scale(1,1.028)" font-size="12.30" font-weight="normal" font-style="normal" fill="#212529" >1 336</text>
<text transform="translate(1074.36,628.00) scale(1,1.064)" font-size="12.30" font-weight="normal" font-style="normal" fill="#212529" >52</text>
<text transform="translate(28.40,702.00) scale(1,1.037)" font-size="12.61" font-weight="normal" font-style="normal" fill="#212529" >Appartement</text>
<text transform="translate(333.00,702.00) scale(1,1.111)" font-size="11.78" font-weight="normal" font-style="normal" fill="#212529" >2023</text>
<text transform="translate(544.26,684.80) scale(1,1.028)" font-size="12.30" font-weight="normal" font-style="normal" fill="#212529" >18</text>
<text transform="translate(481.66,718.80) scale(1,1.028)" font-size="12.30" font-weight="normal" font-style="normal" fill="#212529" >13</text>
<text transform="translate(606.76,718.80) scale(1,1.028)" font-size="12.30" font-weight="normal" font-style="normal" fill="#212529" >24</text>
<text transform="translate(763.64,684.80) scale(1,1.028)" font-size="12.30" font-weight="normal" font-style="normal" fill="#212529" >942</text>
<text transform="translate(689.44,718.80) scale(1,1.028)" font-size="12.30" font-weight="normal" font-style="normal" fill="#212529" >701</text>
<text transform="translate(849.41,718.80) scale(1,1.028)" font-size="12.30" font-weight="normal" font-style="normal" fill="#212529" >1 267</text>
<text transform="translate(1074.36,702.00) scale(1,1.064)" font-size="12.30" font-weight="normal" font-style="normal" fill="#212529" >52</text>
<text transform="translate(28.40,776.00) scale(1,1.037)" font-size="12.61" font-weight="normal" font-style="normal" fill="#212529" >Appartement</text>
<text transform="translate(333.00,776.00) scale(1,1.111)" font-size="11.78" font-weight="normal" font-style="normal" fill="#212529" >2022</text>
<text transform="translate(544.26,758.80) scale(1,1.028)" font-size="12.30" font-weight="normal" font-style="normal" fill="#212529" >17</text>
<text transform="translate(481.66,792.80) scale(1,1.028)" font-size="12.30" font-weight="normal" font-style="normal" fill="#212529" >13</text>
<text transform="translate(606.76,792.80) scale(1,1.028)" font-size="12.30" font-weight="normal" font-style="normal" fill="#212529" >23</text>
<text transform="translate(763.64,758.80) scale(1,1.028)" font-size="12.30" font-weight="normal" font-style="normal" fill="#212529" >887</text>
<text transform="translate(689.44,792.80) scale(1,1.028)" font-size="12.30" font-weight="normal" font-style="normal" fill="#212529" >659</text>
<text transform="translate(849.41,792.80) scale(1,1.028)" font-size="12.30" font-weight="normal" font-style="normal" fill="#212529" >1 195</text>
<text transform="translate(1074.36,776.00) scale(1,1.064)" font-size="12.30" font-weight="normal" font-style="normal" fill="#212529" >52</text>
<text transform="translate(28.70,850.00) scale(1,1.074)" font-size="12.18" font-weight="normal" font-style="normal" fill="#212529" >Appartement T1-T2</text>
<text transform="translate(333.00,850.00) scale(1,1.111)" font-size="11.78" font-weight="normal" font-style="normal" fill="#212529" >2024</text>
<text transform="translate(544.26,832.80) scale(1,1.028)" font-size="12.30" font-weight="normal" font-style="normal" fill="#212529" >22</text>
<text transform="translate(481.66,866.80) scale(1,1.028)" font-size="12.30" font-weight="normal" font-style="normal" fill="#212529" >17</text>
<text transform="translate(606.76,866.80) scale(1,1.028)" font-size="12.30" font-weight="normal" font-style="normal" fill="#212529" >28</text>
<text transform="translate(763.64,832.80) scale(1,1.028)" font-size="12.30" font-weight="normal" font-style="normal" fill="#212529" >807</text>
<text transform="translate(689.44,866.80) scale(1,1.028)" font-size="12.30" font-weight="normal" font-style="normal" fill="#212529" >634</text>
<text transform="translate(849.41,866.80) scale(1,1.028)" font-size="12.30" font-weight="normal" font-style="normal" fill="#212529" >1 028</text>
<text transform="translate(1074.36,850.00) scale(1,1.064)" font-size="12.30" font-weight="normal" font-style="normal" fill="#212529" >37</text>
</svg>
</body>
</html>
